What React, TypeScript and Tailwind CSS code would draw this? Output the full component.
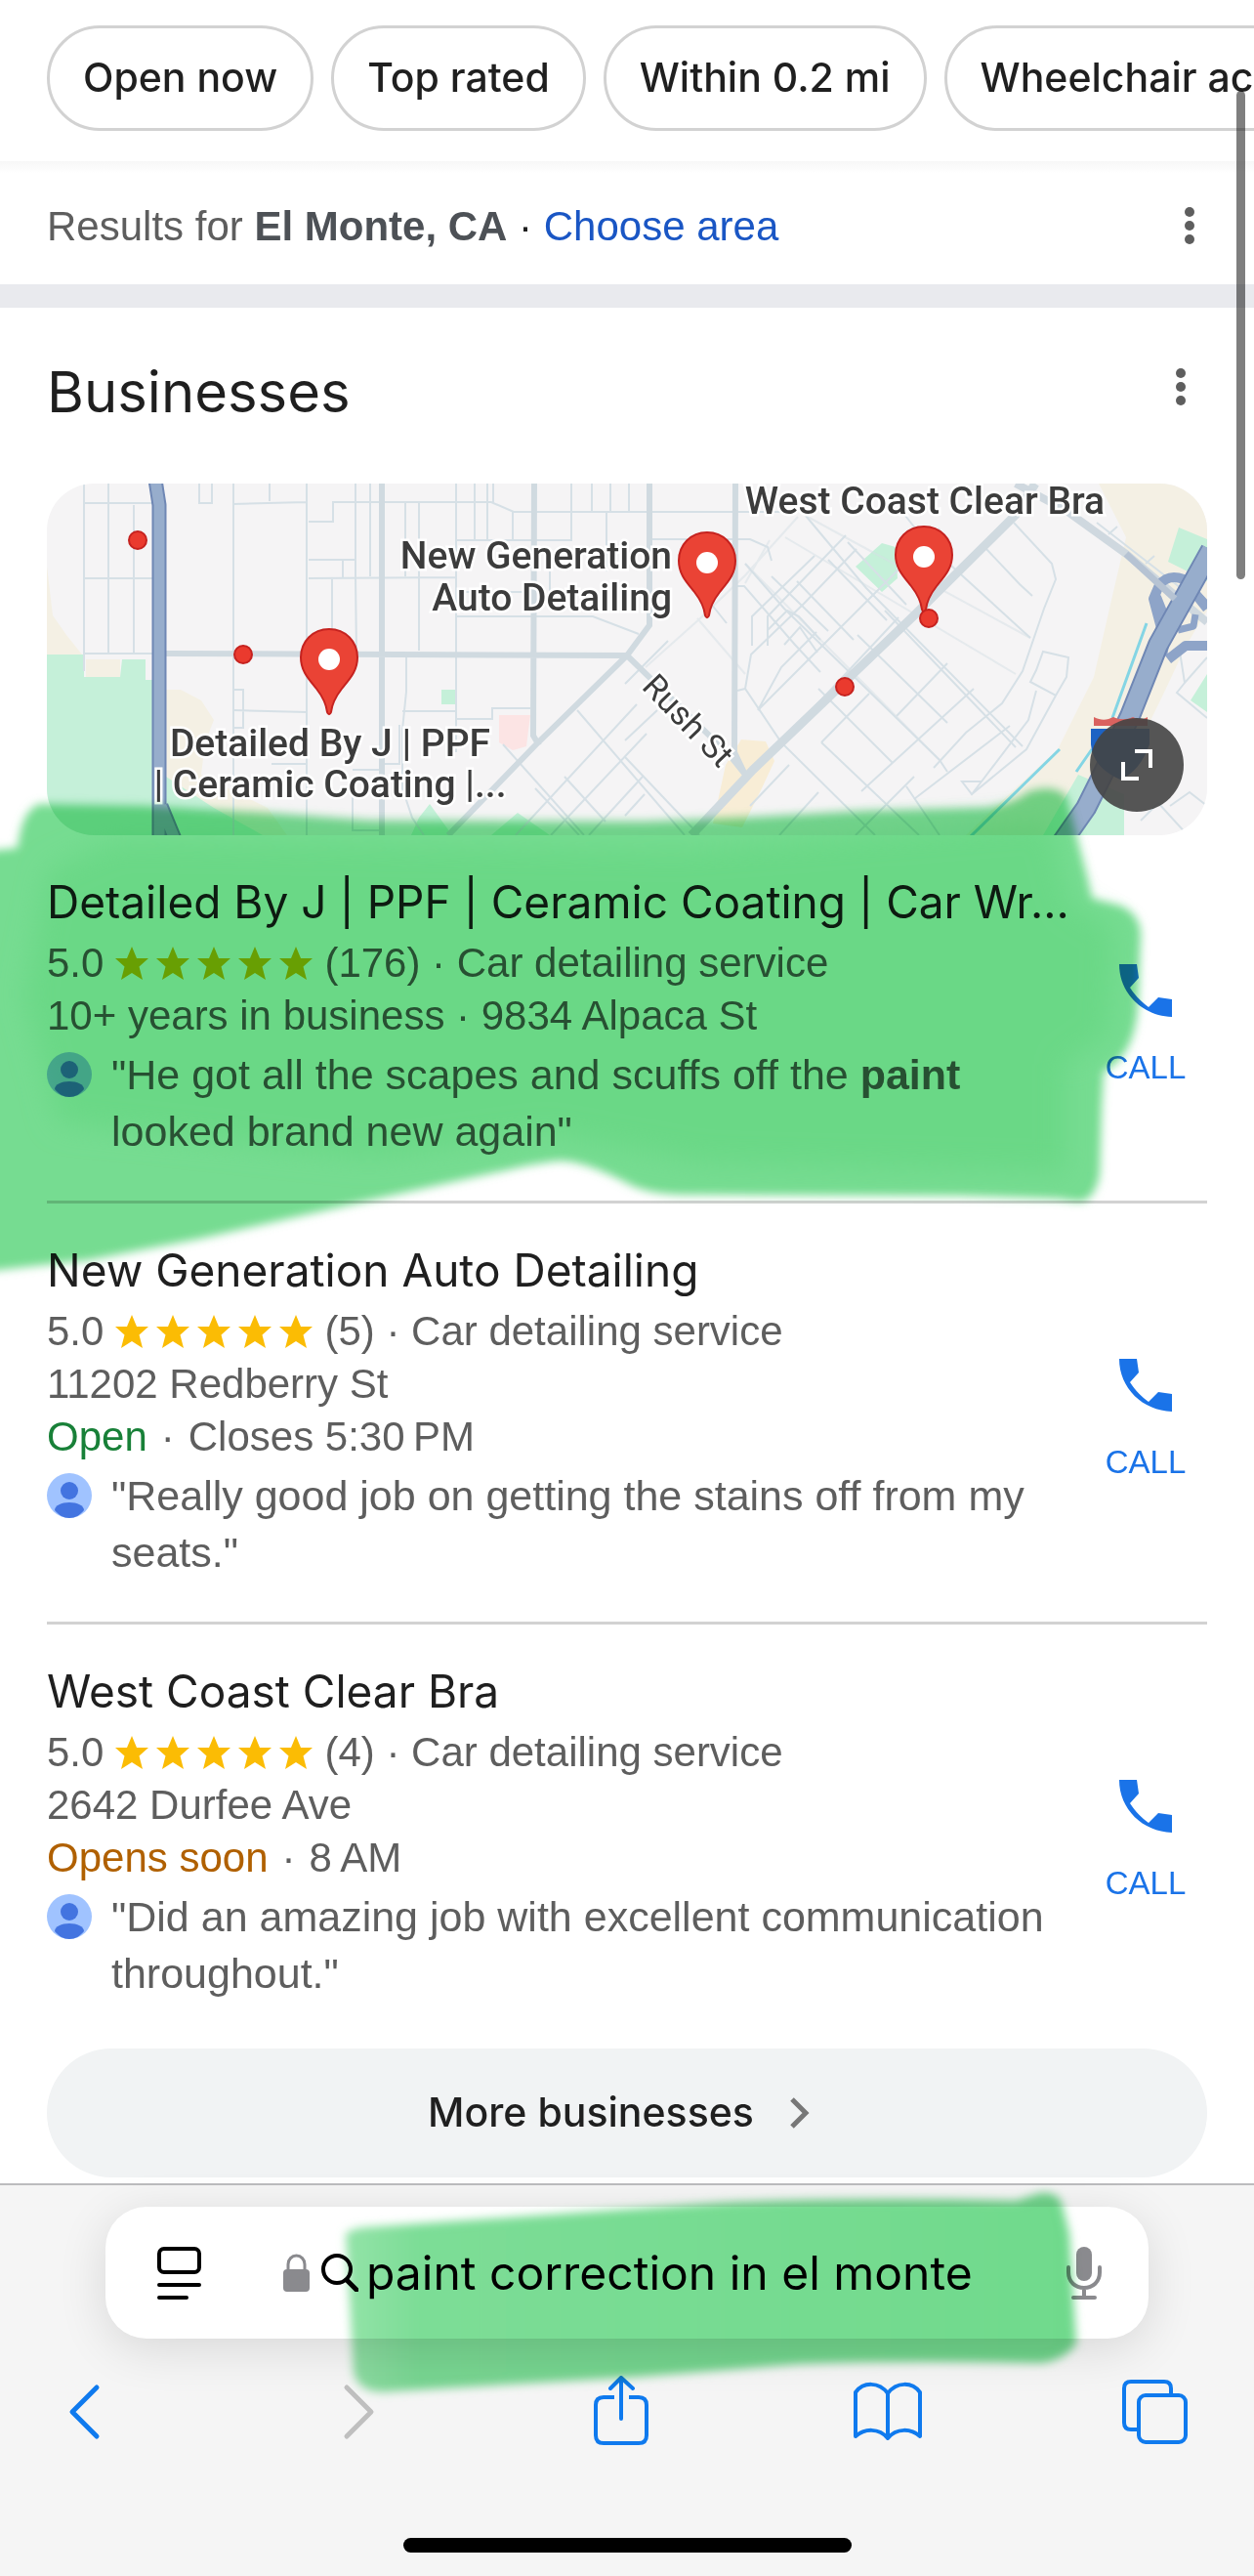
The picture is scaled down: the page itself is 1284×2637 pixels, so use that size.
import React from "react";

interface Business {
  name: string;
  reviews: number;
  lines: React.ReactNode[];
  quote: React.ReactNode;
}

const filters = ["Open now", "Top rated", "Within 0.2 mi", "Wheelchair accessible"];

const businesses: Business[] = [
  {
    name: "Detailed By J | PPF | Ceramic Coating | Car Wr...",
    reviews: 176,
    lines: ["10+ years in business · 9834 Alpaca St"],
    quote: (
      <>
        "He got all the scapes and scuffs off the <b>paint</b> looked brand new again"
      </>
    ),
  },
  {
    name: "New Generation Auto Detailing",
    reviews: 5,
    lines: ["11202 Redberry St", <Hours status="Open" color="text-[#188038]" time={"Closes 5:30\u2009PM"} />],
    quote: '"Really good job on getting the stains off from my seats."',
  },
  {
    name: "West Coast Clear Bra",
    reviews: 4,
    lines: ["2642 Durfee Ave", <Hours status="Opens soon" color="text-[#b06000]" time={"8\u2009AM"} />],
    quote: '"Did an amazing job with excellent communication throughout."',
  },
];

function Hours({ status, color, time }: { status: string; color: string; time: string }) {
  return (
    <span className="flex gap-[14px]">
      <span className={color}>{status}</span>
      <span>·</span>
      <span>{time}</span>
    </span>
  );
}

function MoreDots() {
  return (
    <svg width="12" height="40" viewBox="0 0 12 40" fill="#5e5e5e">
      <circle cx="6" cy="6" r="5" />
      <circle cx="6" cy="20" r="5" />
      <circle cx="6" cy="34" r="5" />
    </svg>
  );
}

function Stars() {
  return (
    <span className="flex gap-2" role="img" aria-label="Rated 5 out of 5">
      {[0, 1, 2, 3, 4].map((i) => (
        <svg key={i} width="34" height="34" viewBox="0 0 34 34" fill="#fbbc04">
          <path d="M17 0l5 12h12L24.500 20.500 28 34l-11-7L6 34l3.500-13.500L0 12h12z" />
        </svg>
      ))}
    </span>
  );
}

function Avatar() {
  return (
    <svg className="mt-[6px] shrink-0" width="46" height="46" viewBox="0 0 46 46">
      <circle cx="23" cy="23" r="23" fill="#a0c3ff" />
      <circle cx="23" cy="18" r="9" fill="#4374e0" />
      <path d="M8 38c0-5 7-8 15-8s15 3 15 8c-4 5-9 8-15 8s-11-3-15-8z" fill="#4374e0" />
    </svg>
  );
}

function Pin({ x, y }: { x: number; y: number }) {
  return (
    <g transform={`translate(${x} ${y})`}>
      <path
        d="M0 0C-17 0-29 13-29 29c0 14 8 22 16 32C-6 70-3 76-2 85c1 3 3 3 4 0 1-9 4-15 11-24 8-10 16-18 16-32C29 13 17 0 0 0z"
        fill="#ea4335"
        stroke="#c5221f"
        strokeWidth="2"
      />
      <circle cx="0" cy="31" r="11" fill="#fff" />
    </g>
  );
}

function MapView() {
  return (
    <svg
      className="block h-full w-full"
      viewBox="0 0 1188 360"
      preserveAspectRatio="xMidYMid slice"
      role="img"
      aria-label="Map of businesses"
    >
      <rect width="1188" height="360" fill="#f5f4f5" />

      {/* Land areas */}
      <g fill="#f4f0e4">
        <path d="M0 85l6 50 14 20 16 20H0zM40 180h35v18H40z" />
        <path d="M122 211h15l21 11 13 20-9 23-4 33 68 34 20 28H122z" />
        <path d="M1077 0h111v130l-21 35-25 53-40 82-60 60H941l29-28 65-60 37-74 19-83 14-60z" />
      </g>
      <g fill="#c5f0d9">
        <path d="M0 175h38v23h37l2-18h24v21h8v159H0zM122 300l49 32 50 28h-99z" />
        <path d="M404 211h15v15h-15zM392 328l23 32h-42l8-18zM482 337l33 23h-60z" />
        <path d="M828 85l27-24 14 4 2 32-16 14zM1159 45l29 12v43l-40-20zM1188 195l-17 27 17 12z" />
        <path d="M1056 298l47 20v42h-83z" />
      </g>
      <path d="M463 237h32l-4 32-14 4-14-8z" fill="#fce4e4" />
      <path d="M711 262l25 2 9 20-13 28-20 40-30-4 13-60z" fill="#f8edd6" />

      {/* Side streets */}
      <g fill="none" stroke="#d6e0e6" strokeWidth="2">
        <path d="M38 0v192M63 0v174M89 22v152M38 20h70M38 97h70M38 174h70M156 0v20h13V0" />
        <path d="M191 0v360M228 0v18M191 21l75-2M266 0v360M268 39h25V19h162l23 10h290M316 0v95l1 80M331 0v95M367 20v75M381 19v152" />
        <path d="M268 78h48M303 78v19M268 97l151-1M292 97v78M419 0v275M419 58h118V0M477 29v29M438 0v58M451 0v58M457 0v19" />
        <path d="M558 0v29M577 0v29M596 0v29M573 30v60M515 90v30M419 111h79M419 136h140l47 18" />
        <path d="M191 232l75 2M192 211h9v39h-9M368 177v36l-4 39v60l10 30 12 18M364 233h55M420 241h36v-11h39M230 287h36M343 287h18v-40M313 315v40h30M343 293h-30" />
        <path d="M467 267l83 93M543 232l110 128M500 312l45 48M530 300l42 46M480 360l124-134M516 360l98-104M555 360l55-60M592 263l33-31M592 340l20-22M592 280l76 80" />
        <path d="M613 188l56-50 46-44 54-60M666 138l49 57M715 82l199 201M756 55l236 140M740 58l-25 44M777 33l230 125" opacity=".5" />
        <path d="M777 33l62 74 160 162M879 33l24 30 104 95M962 67l34 36 13 12M990 40l39 42 4 16-12 30-22 64-21 33-37 30-33 36" />
        <path d="M715 82l40 46 159 155 8 12M620 57h100l18 8 4 14M706 105h8l52 60 26 28M707 212l8-2 37 55 96 95M715 210l6-35 54-52 54-56M722 166v-30l64-62M738 166v-30l80-83" />
        <path d="M728 232l120-120 66-66M738 150l20-20 12 6 22 24M755 165l16-18 18 26M728 232l24-44 36-36M752 265l120-128M793 265l49-50M834 315l115-105M888 323l98-75M830 155l92 90M858 130l134 140M790 210l76 76M870 238l52-54M768 100l58 60M800 78l60 62M820 60l60 64M742 95l58 56" />
        <path d="M793 265l100 95M828 360l60-60M880 310l34 50M720 330l40-42M750 360l40-44M592 205l44-44M676 118l20 25M1020 172l26 6-2 20-11 19-26-14 6-12zM1013 212l-8 30-48 63h-20l10 13 56-46 30-55M937 305l10 13 10-13" />
        <path d="M1160 172l5 32 23-26M1165 204l-8 10 31 26M1150 330l20-14 18 14M1120 345l18-18 30 33M1075 40l90 70M1087 52l9-8M1125 82l9-8" />
      </g>

      {/* Main roads */}
      <g fill="none" stroke="#d0dae0" strokeWidth="6">
        <path d="M343 0v360M499 0l-1 258 6 10M122 174l472 2M617 0v145l-23 31-91 89-92 95" />
        <path d="M594 176l105 102 16 20M705 0l-1 275 11 23" />
      </g>
      <path d="M1012 0l-20 32-104 103-165 158-63 67" fill="none" stroke="#d0dae0" strokeWidth="9" />
      <path d="M992 0l52 28 61 44 83 70" fill="none" stroke="#cfd8df" strokeWidth="8" />

      {/* Freeways */}
      <g fill="none" strokeLinejoin="round">
        <path d="M111-4l4 26v342M117 330l14 34" stroke="#6f87b4" strokeWidth="15" />
        <path d="M111-4l4 26v342M117 330l14 34" stroke="#97adcc" strokeWidth="11" />
        <path d="M1188 128l-24-30q-16-6-25 6l-6 14 8 30-4 30M1136 116l12 30-6 30M1148 180l18-14 22 0" stroke="#8ea4c8" strokeWidth="10" />
        <path d="M1158 150l16-4 2-12M1164 98l26 28" stroke="#8ea4c8" strokeWidth="7" />
        <path d="M1192 68l-54 97-29 73-28 60-17 34-28 40" stroke="#6f87b4" strokeWidth="22" />
        <path d="M1192 68l-54 97-29 73-28 60-17 34-28 40" stroke="#97adcc" strokeWidth="18" />
        <path d="M1105 72l50 46" stroke="#b6c3d3" strokeWidth="7" />
      </g>
      <path d="M1126 143l-35 97M1070 272l-16 23M1037 272l-92 90" fill="none" stroke="#84d5e4" strokeWidth="3" />
      <path d="M1072 239c8 4 14 3 20 0 6 3 14 3 20 0 6 3 10 3 15 0v9h-55z" fill="#d9625f" />
      <path d="M1069 251h60v16q-10 28-30 36-28-12-30-36z" fill="#1d63c4" />

      {/* Markers */}
      <g fill="#ea3a2e" stroke="#c5221f" strokeWidth="2">
        <circle cx="93" cy="58" r="9" />
        <circle cx="201" cy="175" r="9" />
        <circle cx="817" cy="208" r="9" />
      </g>
      <Pin x={289} y={149} />
      <Pin x={676} y={50} />
      <Pin x={898} y={44} />
      <circle cx="903" cy="138" r="9" fill="#ea3a2e" stroke="#c5221f" strokeWidth="2" />

      <g
        className="font-['Roboto',sans-serif] text-[39px] font-medium"
        fill="#3c3c3c"
        stroke="#fff"
        strokeWidth="5"
        paintOrder="stroke"
      >
        <text x="640" y="87" textAnchor="end">New Generation</text>
        <text x="640" y="130" textAnchor="end">Auto Detailing</text>
        <text x="899" y="31" textAnchor="middle">West Coast Clear Bra</text>
        <text x="290" y="279" textAnchor="middle">Detailed By J | PPF</text>
        <text x="290" y="321" textAnchor="middle">| Ceramic Coating |...</text>
        <text className="text-[34px] font-normal" transform="translate(608 209) rotate(46)">Rush St</text>
      </g>
    </svg>
  );
}

function BusinessRow({ business }: { business: Business }) {
  return (
    <li className="flex border-b-[3px] border-[#d2d2d2] pt-[38px] pb-[42px] last:border-b-0">
      <div className="min-w-0 flex-1">
        <h3 className="truncate font-['Inter',sans-serif] text-[46px] leading-[60px] text-[#1f1f1f]">{business.name}</h3>
        <div className="mt-[6px] flex items-center gap-3 leading-[54px]">
          <span>5.0</span>
          <Stars />
          <span>({business.reviews}) · Car detailing service</span>
        </div>
        {business.lines.map((line, i) => (
          <div key={i} className="leading-[54px]">{line}</div>
        ))}
        <div className="mt-1 flex gap-5 pr-8 text-[43px] leading-[58px]">
          <Avatar />
          <p>{business.quote}</p>
        </div>
      </div>
      <a href="#call" className="flex w-[126px] shrink-0 flex-col items-center justify-center gap-8 pt-5 text-[#1a73e8]">
        <svg width="54" height="54" viewBox="0 0 54 54" fill="#1a73e8">
          <path d="M0 0h18l2 14-9 10c6 9 12 15 19 20l10-10 14 2v18C24 53 0 30 0 0z" />
        </svg>
        <span className="text-[33px] leading-[40px]">CALL</span>
      </a>
    </li>
  );
}

function BrowserBar() {
  return (
    <footer className="relative border-t-2 border-[#bcbcbe] bg-[#f5f5f5] pt-[22px] pb-6">
      <div className="mx-[108px] flex h-[135px] items-center rounded-[42px] bg-white pr-12 pl-[53px] shadow-[0_10px_50px_rgba(0,0,0,0.12)]">
        <button type="button" aria-label="Page menu" className="mr-[84px] shrink-0">
          <svg width="45" height="54" viewBox="0 0 45 54" fill="none" stroke="#000" strokeWidth="4" strokeLinecap="round">
            <rect x="2" y="2" width="41" height="24" rx="5" />
            <path d="M2 39h41M2 52h28" />
          </svg>
        </button>
        <svg className="shrink-0" width="27" height="39" viewBox="0 0 27 39">
          <path d="M5 18v-7a8.500 9 0 0 1 17 0v7" fill="none" stroke="#8a8a8e" strokeWidth="3" />
          <rect y="16" width="27" height="23" rx="4" fill="#8a8a8e" />
        </svg>
        <svg className="ml-3 shrink-0" width="38" height="39" viewBox="0 0 38 39" fill="none" stroke="#000" strokeWidth="4" strokeLinecap="round">
          <circle cx="16" cy="16" r="14" />
          <path d="M26 27l10 10" strokeWidth="5" />
        </svg>
        <input
          type="text"
          aria-label="Search or enter website name"
          defaultValue="paint correction in el monte"
          className="ml-2 min-w-0 flex-1 bg-transparent font-['Inter',sans-serif] text-[48px] text-black outline-none"
        />
        <button type="button" aria-label="Voice search" className="shrink-0">
          <svg width="36" height="54" viewBox="0 0 36 54" fill="none" stroke="#8a8a8e" strokeWidth="4" strokeLinecap="round">
            <rect x="10" y="0" width="16" height="35" rx="8" fill="#8a8a8e" stroke="none" />
            <path d="M2 21v5c0 10 7 16 16 16s16-6 16-16v-5M18 42v9M7 52h22" />
          </svg>
        </button>
      </div>

      <nav className="mt-[38px] flex justify-between pr-[66px] pl-[50px]">
        <button type="button" aria-label="Back">
          <svg width="72" height="72" viewBox="0 0 72 72" fill="none" stroke="#0f7aee" strokeWidth="5" strokeLinecap="round" strokeLinejoin="round">
            <path d="M49 12L24 37l25 25" />
          </svg>
        </button>
        <button type="button" aria-label="Forward" disabled>
          <svg width="72" height="72" viewBox="0 0 72 72" fill="none" stroke="#bfbfbf" strokeWidth="5" strokeLinecap="round" strokeLinejoin="round">
            <path d="M31 12l25 25-25 25" />
          </svg>
        </button>
        <button type="button" aria-label="Share">
          <svg width="72" height="72" viewBox="0 0 72 72" fill="none" stroke="#0f7aee" strokeWidth="4" strokeLinecap="round" strokeLinejoin="round">
            <path d="M31 22H20q-8 0-8 8v31q0 8 8 8h36q8 0 8-8V30q0-8-8-8H46" strokeLinecap="butt" />
            <path d="M38 44V2M27 13L38 2l12 11" />
          </svg>
        </button>
        <button type="button" aria-label="Bookmarks">
          <svg width="72" height="72" viewBox="0 0 72 72" fill="none" stroke="#0f7aee" strokeWidth="4" strokeLinecap="round" strokeLinejoin="round">
            <path d="M37 18c-9-12-25-12-33-1v45c9-8 24-9 33 2 9-11 24-10 33-2V17c-8-11-24-11-33 1zM37 18v46" />
          </svg>
        </button>
        <button type="button" aria-label="Tabs">
          <svg width="72" height="72" viewBox="0 0 72 72" fill="none" stroke="#0f7aee" strokeWidth="4">
            <path d="M20 55h-8q-7 0-7-7V13q0-7 7-7h34q7 0 7 7v6" />
            <rect x="20" y="20" width="48" height="48" rx="7" />
          </svg>
        </button>
      </nav>

      <div className="mx-auto mt-[94px] h-[15px] w-[459px] rounded-full bg-black" />

      {/* Marker stroke over the query */}
      <svg
        className="pointer-events-none absolute inset-x-0 -top-[2px] h-full w-full mix-blend-multiply"
        viewBox="0 0 1284 402"
        preserveAspectRatio="none"
        aria-hidden="true"
      >
        <defs>
          <filter id="soft-query" x="-5%" y="-10%" width="110%" height="120%">
            <feGaussianBlur stdDeviation="5" />
          </filter>
          <linearGradient id="ink-query">
            <stop offset="0" stopColor="#93e3a8" />
            <stop offset=".1" stopColor="#7cdd96" />
            <stop offset="1" stopColor="#70d98c" />
          </linearGradient>
        </defs>
        <path
          filter="url(#soft-query)"
          fill="url(#ink-query)"
          d="M354 52Q360 46 377 45L524 35 737 20Q880 14 1040 18L1065 10Q1082 8 1087 20L1095 52 1102 165Q1090 182 1065 185 930 182 819 186L655 199 401 214Q368 218 362 195z"
        />
      </svg>
    </footer>
  );
}

export default function App() {
  return (
    <div className="relative overflow-hidden bg-white font-['Liberation_Sans',Arial,sans-serif] text-[42px] text-[#5e5e5e]">
      <header className="flex gap-[18px] pt-[26px] pb-[31px] pl-12">
        {filters.map((label) => (
          <button
            key={label}
            type="button"
            className="h-[108px] shrink-0 rounded-full border-[3px] border-[#d2d2d2] px-[34px] font-['Inter',sans-serif] text-[41px] font-medium whitespace-nowrap text-[#1f1f1f]"
          >
            {label}
          </button>
        ))}
      </header>

      <div className="flex h-[126px] items-center justify-between bg-linear-to-b from-[#f7f7f7] to-white to-10% px-12 pt-[6px]">
        <p>
          Results for <b className="text-[#4d5156]">El Monte, CA</b> <span className="text-[#1f1f1f]">·</span>{" "}
          <a href="#area" className="text-[#1a56c4]">Choose area</a>
        </p>
        <button type="button" aria-label="Location options" className="flex w-9 justify-center">
          <MoreDots />
        </button>
      </div>
      <div className="h-6 bg-[#e9eaee]" />

      <main className="px-12">
        <div className="mt-12 mb-14 flex h-[76px] items-center justify-between">
          <h2 className="font-['Inter',sans-serif] text-[58px] leading-[76px] text-[#1f1f1f]">Businesses</h2>
          <button type="button" aria-label="More options" className="flex h-[66px] w-[54px] items-center justify-center self-start">
            <MoreDots />
          </button>
        </div>

        <div className="relative h-[360px] overflow-hidden rounded-[48px]">
          <MapView />
          <button
            type="button"
            aria-label="Expand map"
            className="absolute right-[24px] bottom-[24px] flex size-[96px] items-center justify-center rounded-full bg-[#444444]/90"
          >
            <svg width="32" height="32" viewBox="0 0 32 32" fill="none" stroke="#fff" strokeWidth="4">
              <path d="M14 2h16v17M2 13v17h16" />
            </svg>
          </button>
        </div>

        <ul>
          {businesses.map((business) => (
            <BusinessRow key={business.name} business={business} />
          ))}
        </ul>

        <button
          type="button"
          className="mt-[6px] mb-[6px] flex h-[132px] w-full items-center justify-center gap-9 rounded-full bg-[#f1f3f4] pr-4 font-['Inter',sans-serif] text-[41px] font-medium text-[#1f1f1f]"
        >
          More businesses
          <svg width="22" height="32" viewBox="0 0 22 32" fill="none" stroke="#777" strokeWidth="5">
            <path d="M3 2l14 14L3 30" />
          </svg>
        </button>
      </main>

      <BrowserBar />

      {/* Marker stroke over the first result */}
      <svg
        className="pointer-events-none absolute top-[780px] left-0 h-[560px] w-full mix-blend-multiply"
        viewBox="0 780 1284 560"
        preserveAspectRatio="none"
        aria-hidden="true"
      >
        <defs>
          <filter id="soft-result" x="-5%" y="-10%" width="110%" height="120%">
            <feGaussianBlur stdDeviation="5" />
          </filter>
          <filter id="soft-inner" x="-5%" y="-10%" width="110%" height="120%">
            <feGaussianBlur stdDeviation="14" />
          </filter>
        </defs>
        <path
          filter="url(#soft-result)"
          fill="#76dc91"
          d="M-20 872L18 868Q22 830 40 823L147 825 286 833 379 840 660 841 763 837 886 830 1010 827Q1040 822 1052 811 1078 802 1092 815L1102 855 1113 897 1118 920 1147 927Q1166 935 1168 955L1165 1030Q1162 1080 1130 1097L1128 1134 1126 1203Q1120 1230 1105 1230L1081 1227 983 1224 696 1223Q660 1222 640 1210 590 1184 565 1189L540 1193 368 1231 205 1268 90 1290-20 1302z"
        />
        <path
          filter="url(#soft-inner)"
          fill="#6ad886"
          d="M50 890L120 860 700 870 1075 840 1095 925 1140 950 1135 1060 1090 1090 1090 1200 720 1190 560 1160 380 1185 60 1150 25 1020z"
        />
      </svg>

      {/* Scroll indicator */}
      <div className="absolute top-[93px] right-[9px] h-[500px] w-[9px] rounded-full bg-black/50" />
    </div>
  );
}
